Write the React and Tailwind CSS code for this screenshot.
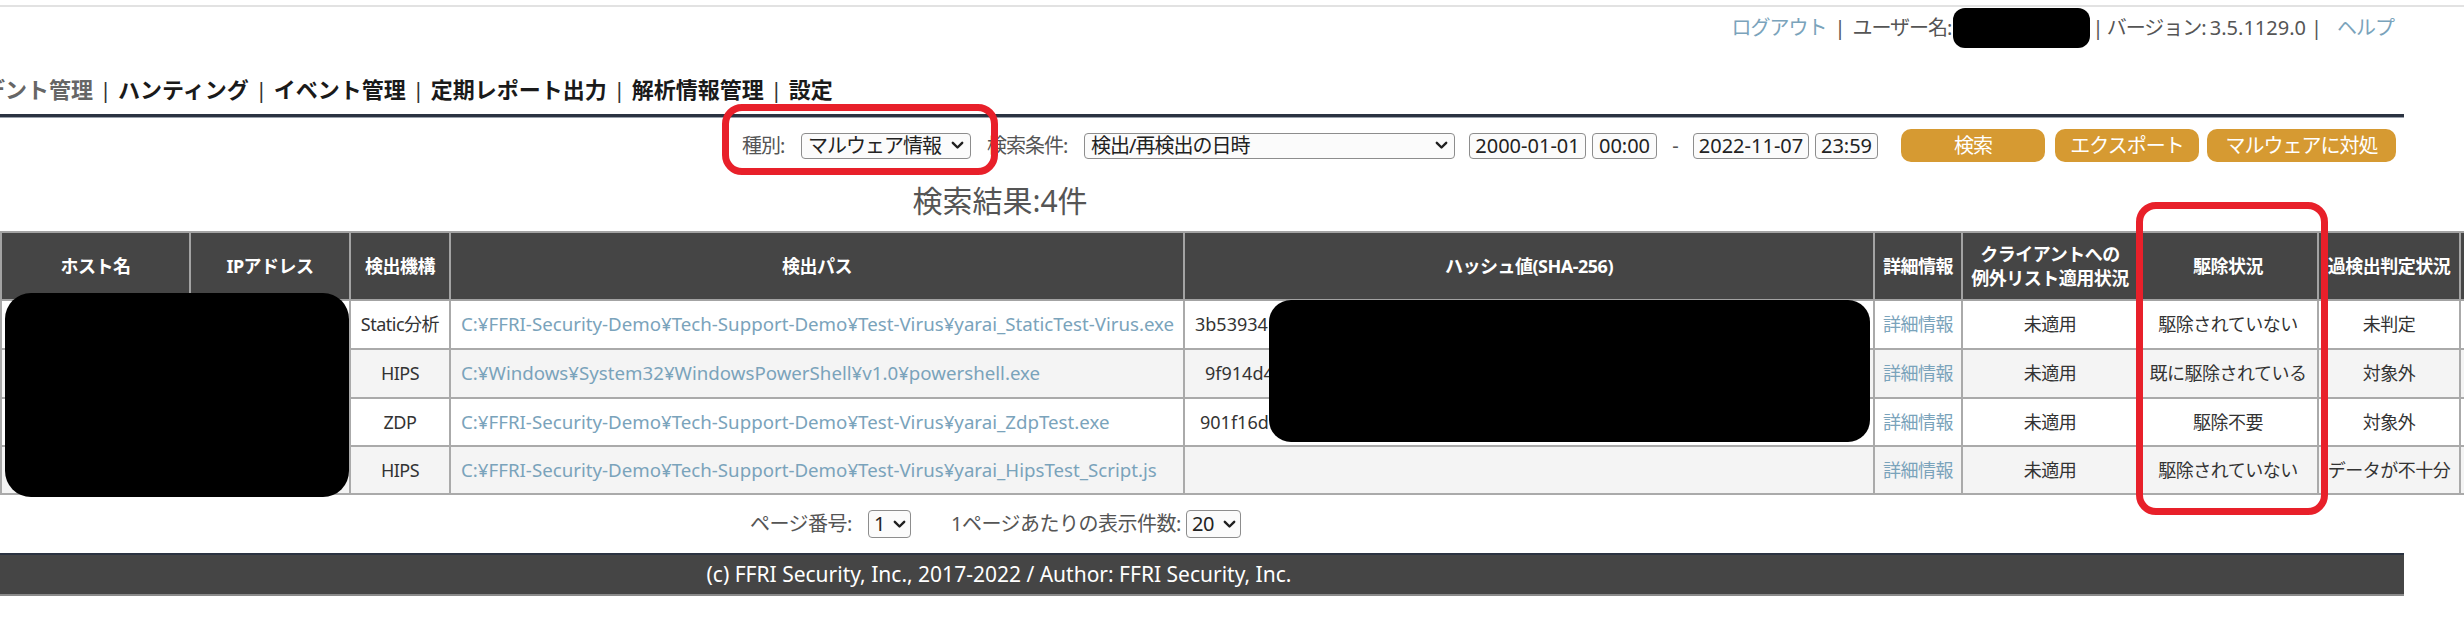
import React from "react";

const F = "font-['Noto_Sans','Noto_Sans_CJK_JP',sans-serif]";

function Chevron() {
  return (
    <svg width="13" height="9" viewBox="0 0 13 9" className="shrink-0">
      <path d="M1.8 1.8 L6.5 6.5 L11.2 1.8" fill="none" stroke="#1f1f1f" strokeWidth="2.4" strokeLinecap="round" strokeLinejoin="round" />
    </svg>
  );
}

function SelectBox({ className, children }) {
  return (
    <div className={`shrink-0 flex items-center justify-between border border-[#8d8d8d] rounded-[4px] bg-[#fbfbfb] text-[#222] ${className}`}>
      <span className="whitespace-nowrap">{children}</span>
      <Chevron />
    </div>
  );
}

function InputBox({ className, children }) {
  return (
    <div className={`shrink-0 flex items-center justify-center border border-[#8d8d8d] rounded-[4px] bg-[#fbfbfb] text-[#222] tracking-[0px] ${className}`}>
      {children}
    </div>
  );
}

function Btn({ className, children }) {
  return (
    <div className={`shrink-0 h-[33px] flex items-center justify-center rounded-[10px] bg-[#d69a32] text-white ${className}`}>
      {children}
    </div>
  );
}

function Sep() {
  return <span className="inline-block w-[25px] text-center font-normal text-[#333]">|</span>;
}

const rows = [
  {
    mech: "Static分析",
    path: "C:¥FFRI-Security-Demo¥Tech-Support-Demo¥Test-Virus¥yarai_StaticTest-Virus.exe",
    hash: "3b53934",
    hp: "pl-[10px]",
    status: "駆除されていない",
    judge: "未判定",
    bg: "bg-white",
  },
  {
    mech: "HIPS",
    path: "C:¥Windows¥System32¥WindowsPowerShell¥v1.0¥powershell.exe",
    hash: "9f914d4",
    hp: "pl-[20px]",
    status: "既に駆除されている",
    judge: "対象外",
    bg: "bg-[#f4f4f4]",
  },
  {
    mech: "ZDP",
    path: "C:¥FFRI-Security-Demo¥Tech-Support-Demo¥Test-Virus¥yarai_ZdpTest.exe",
    hash: "901f16d",
    hp: "pl-[15px]",
    status: "駆除不要",
    judge: "対象外",
    bg: "bg-white",
  },
  {
    mech: "HIPS",
    path: "C:¥FFRI-Security-Demo¥Tech-Support-Demo¥Test-Virus¥yarai_HipsTest_Script.js",
    hash: "",
    hp: "pl-[10px]",
    status: "駆除されていない",
    judge: "データが不十分",
    bg: "bg-[#f4f4f4]",
  },
];

const heights = ["h-[49px]", "h-[49px]", "h-[48px]", "h-[48px]"];

export default function App() {
  const th = "border-2 border-[#a3a3a3] bg-[#454545] text-white font-bold text-[18px] tracking-[-0.5px] leading-[24px] text-center px-0";
  const cell = "border-2 border-[#aaaaaa] text-center px-0";
  const jp = "text-[18px] tracking-[-0.5px] text-[#333]";
  const link = "text-[#7aa3bb]";
  return (
    <div className={`relative w-[2464px] h-[625px] overflow-hidden bg-white ${F} text-[#555]`}>
      {/* top hairline */}
      <div className="mt-[5px] h-[2px] bg-[#e2e2e2]" />

      {/* header links */}
      <div className="h-[41px] flex items-center justify-end pr-[70px] text-[20px] tracking-[-1px] leading-none whitespace-nowrap">
        <span className={link}>ログアウト</span>
        <span className="w-[26px] text-center">|</span>
        <span>ユーザー名:</span>
        <span className="ml-[2px] w-[137px] h-[40px] rounded-[12px] bg-black" />
        <span className="ml-[2px]">|&nbsp;バージョン:&nbsp;</span>
        <span className="tracking-[0px]">3.5.1129.0</span>
        <span className="ml-[5px]">|</span>
        <span className="ml-[16px] text-[#7aa3bb]">ヘルプ</span>
      </div>

      {/* nav */}
      <div className="h-[66px] pt-[26px] text-[22px] font-bold leading-[30px] text-[#1a1a1a] whitespace-nowrap">
        <div className="-ml-[83px] flex">
          <span className="text-[#666]">インシデント管理</span>
          <Sep />
          <span>ハンティング</span>
          <Sep />
          <span>イベント管理</span>
          <Sep />
          <span>定期レポート出力</span>
          <Sep />
          <span>解析情報管理</span>
          <Sep />
          <span>設定</span>
        </div>
      </div>
      <div className="w-[2404px] h-[3px] bg-[#2b3341]" />
      <div className="w-[2404px] h-[1px] bg-[#9aa1ab]" />

      {/* search row */}
      <div className="mt-[11px] h-[33px] flex items-center justify-end pr-[68px] text-[20px] tracking-[-1px] whitespace-nowrap">
        <span className="w-[59px] shrink-0">種別:</span>
        <SelectBox className="w-[170px] h-[26px] pl-[6px] pr-[6px]">マルウェア情報</SelectBox>
        <span className="ml-[16px] w-[97px] shrink-0">検索条件:</span>
        <SelectBox className="w-[371px] h-[26px] pl-[6px] pr-[6px]">検出/再検出の日時</SelectBox>
        <InputBox className="ml-[14px] w-[117px] h-[26px]">2000-01-01</InputBox>
        <InputBox className="ml-[6px] w-[65px] h-[26px]">00:00</InputBox>
        <span className="w-[36px] shrink-0 text-center">-</span>
        <InputBox className="w-[116px] h-[26px]">2022-11-07</InputBox>
        <InputBox className="ml-[6px] w-[63px] h-[26px]">23:59</InputBox>
        <Btn className="ml-[23px] w-[144px]">検索</Btn>
        <Btn className="ml-[10px] w-[144px]">エクスポート</Btn>
        <Btn className="ml-[8px] w-[189px]">マルウェアに対処</Btn>
      </div>

      {/* result count */}
      <div className="mt-[19px] w-[2000px] text-center text-[30px] leading-[40px] text-[#555]">検索結果:4件</div>

      {/* table */}
      <table className="mt-[10px] border-collapse table-fixed w-[2609px]">
        <colgroup>
          <col className="w-[189px]" />
          <col className="w-[160px]" />
          <col className="w-[100px]" />
          <col className="w-[734px]" />
          <col className="w-[690px]" />
          <col className="w-[88px]" />
          <col className="w-[176px]" />
          <col className="w-[180px]" />
          <col className="w-[142px]" />
          <col className="w-[150px]" />
        </colgroup>
        <thead>
          <tr className="h-[68px]">
            <th className={th}>ホスト名</th>
            <th className={th}>IPアドレス</th>
            <th className={th}>検出機構</th>
            <th className={th}>検出パス</th>
            <th className={th}>ハッシュ値(SHA-256)</th>
            <th className={th}>詳細情報</th>
            <th className={th}>
              <div>クライアントへの</div>
              <div>例外リスト適用状況</div>
            </th>
            <th className={th}>駆除状況</th>
            <th className={th}>
              <div className="flex justify-center whitespace-nowrap">過検出判定状況</div>
            </th>
            <th className={th}></th>
          </tr>
        </thead>
        <tbody>
          {rows.map((r, i) => (
            <tr key={i} className={`${heights[i]} ${r.bg}`}>
              <td className={cell}></td>
              <td className={cell}></td>
              <td className={`${cell} ${jp} whitespace-nowrap`}>{r.mech}</td>
              <td className={`${cell} text-left pl-[10px] whitespace-nowrap text-[18.7px] ${link}`}>{r.path}</td>
              <td className={`${cell} text-left ${r.hp} whitespace-nowrap text-[18px] text-[#333]`}>{r.hash}</td>
              <td className={`${cell} text-[18px] tracking-[-0.5px] ${link}`}>詳細情報</td>
              <td className={`${cell} ${jp}`}>未適用</td>
              <td className={`${cell} ${jp} whitespace-nowrap`}>{r.status}</td>
              <td className={`${cell} ${jp}`}>
                <div className="flex justify-center whitespace-nowrap">{r.judge}</div>
              </td>
              <td className={cell}></td>
            </tr>
          ))}
        </tbody>
      </table>

      {/* pagination */}
      <div className="mt-[15px] w-[1991px] h-[28px] flex items-center justify-center text-[20px] tracking-[-0.5px] whitespace-nowrap">
        <span className="w-[118px] shrink-0">ページ番号:</span>
        <SelectBox className="w-[43px] h-[28px] pl-[5px] pr-[4px]">1</SelectBox>
        <span className="ml-[40px] w-[235px] shrink-0">1ページあたりの表示件数:</span>
        <SelectBox className="w-[55px] h-[28px] pl-[5px] pr-[4px]">20</SelectBox>
      </div>

      {/* footer */}
      <div className="mt-[15px] w-[2404px] h-[43px] bg-[#454545] border-t-2 border-[#2b3341] border-b-2 border-b-[#8a8a8a] flex items-center">
        <div className="w-[1998px] text-center text-white text-[21px]">
          (c) FFRI Security, Inc., 2017-2022 / Author: FFRI Security, Inc.
        </div>
      </div>

      {/* redactions */}
      <div className="absolute left-[5px] top-[293px] w-[344px] h-[204px] rounded-[26px] bg-black" />
      <div className="absolute left-[1269px] top-[300px] w-[601px] h-[142px] rounded-[22px] bg-black" />

      {/* red annotations */}
      <div className="absolute left-[722px] top-[104px] w-[276px] h-[71px] border-[7px] border-[#e8202a] rounded-[20px]" />
      <div className="absolute left-[2136px] top-[202px] w-[192px] h-[313px] border-[7px] border-[#e8202a] rounded-[20px]" />
    </div>
  );
}
